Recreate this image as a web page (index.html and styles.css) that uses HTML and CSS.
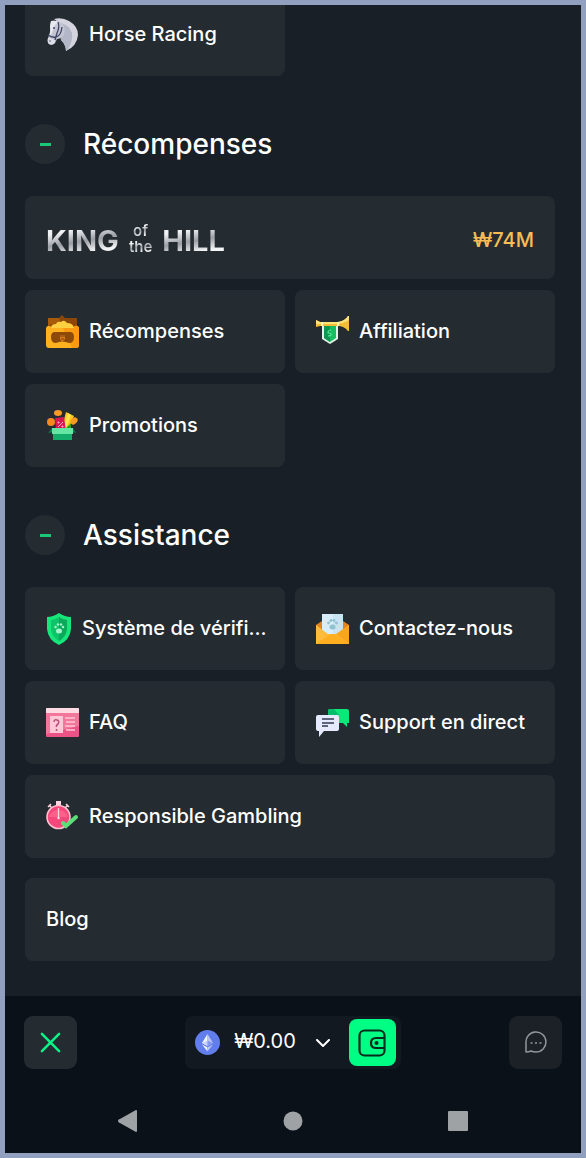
FILE: index.html
```
<!DOCTYPE html>
<html lang="fr">
<head>
  <meta charset="UTF-8" />
  <meta name="viewport" content="width=device-width, initial-scale=1.0" />
  <title>Menu</title>
  <link rel="stylesheet" href="styles.css">
</head>
<body>
  <main class="menu">
    <div class="tiles scrolled">
      <a class="tile" href="#">
        <svg class="icon" viewBox="0 0 33 33" aria-hidden="true">
          <path d="M8 1 Q16 -1 23 3 Q32 8 32 17 Q31 28 20 33 Q20 27 15 22 L12 4z" fill="#d3d4de"/>
          <path d="M15 5 Q23 7 26 15 Q27 23 22 31 L20 33 Q20 27 15 22z" fill="#b3b6c6"/>
          <path d="M5 3 Q11 2 16 5 Q20 10 18 17 Q15 21 11 21 L9 25 Q6 28 3 26 Q1 24 2 20 Q5 14 4 9z" fill="#c3c5d3"/>
          <path d="M5 3 Q9 2 13 4 L9 7 L6 15 L3 19 Q5 12 4 8z" fill="#e8e8f0"/>
          <path d="M2 20 Q6 20 9 22 L9 25 Q6 28 3 26 Q1 24 2 20z" fill="#dddde7"/>
          <path d="M12 4 Q14 9 11 15 L9 22 M2 17 Q6 20 10 19 Q15 18 16 9" fill="none" stroke="#3f4565" stroke-width="1.3"/>
          <circle cx="8" cy="10" r="1" fill="#3f4565"/>
          <circle cx="4" cy="23" r="1" fill="#8b8fa8"/>
        </svg>
        <span>Horse Racing</span>
      </a>
    </div>

    <section>
      <div class="heading">
        <button class="toggle" aria-label="Réduire Récompenses"><i></i></button>
        <h2>Récompenses</h2>
      </div>
      <div class="tiles">
        <a class="tile wide king" href="#">
          <span class="logo"><b>KING</b><small><em>of</em><em>the</em></small><b>HILL</b></span>
          <span class="prize">₩74M</span>
        </a>
        <a class="tile" href="#">
          <svg class="icon" viewBox="0 0 33 33" aria-hidden="true">
            <path d="M2 3 H13 L16 0 L19 3 H31 V14 H2z" fill="#8a4708"/>
            <path d="M2 3 H13 L15 8 L2 10z" fill="#a85b0b"/>
            <path d="M0 13 Q1 10 4 11 Q5 13 8 13 H25 Q28 13 29 11 Q32 10 33 13 V30 Q33 33 30 33 H3 Q0 33 0 30z" fill="#ffb11f"/>
            <path d="M17 13 H25 Q28 13 29 11 Q32 10 33 13 V30 Q33 33 30 33 H26z" fill="#f99a12"/>
            <path d="M5 13 Q5 9 10 9 Q11 6 15 7 Q18 4 21 8 Q27 8 28 13z" fill="#ffcf42"/>
            <path d="M9 17 H24 Q28 17 28 22 Q28 28 23 28 Q16 25 10 28 Q5 28 5 22 Q5 17 9 17z" fill="#8d4a09"/>
            <path d="M14 20 H19 V24 L16 27 L14 24z" fill="#dc7c18"/>
            <path d="M14 21 H19 M15 24 H18" stroke="#7a3e0b"/>
          </svg>
          <span>Récompenses</span>
        </a>
        <a class="tile" href="#">
          <svg class="icon" viewBox="0 0 33 33" aria-hidden="true">
            <path d="M0 5 L4 7 H22 Q29 6 32 1 H33 V16 H32 Q28 11 22 11 H4 L0 12z" fill="#f4bf37"/>
            <path d="M0 5 L4 7 H22 Q29 6 32 1 H33 V5 Q26 9 20 9 H0z" fill="#ffe37b"/>
            <path d="M6 7 V11 M22 7 V11" stroke="#fff3bb" stroke-width="2"/>
            <path d="M6 11 H22 V24 L14 29 L6 24z" fill="#e3f4e9"/>
            <path d="M8 11 H20 V23 L14 27 L8 23z" fill="#18bd61"/>
            <path d="M8 11 H14 V27 L8 23z" fill="#0c9852"/>
            <path d="M15 15 Q12 15 12 18 Q16 18 15 20 Q14 21 12 21" fill="none" stroke="#50e78d" stroke-width="1.2"/>
          </svg>
          <span>Affiliation</span>
        </a>
        <a class="tile" href="#">
          <svg class="icon" viewBox="0 0 33 33" aria-hidden="true">
            <path d="M20 3 L28 7 L22 22 H15z" fill="#ffc51f"/>
            <path d="M22 4 L25 6 L20 20 H17z" fill="#ffe34f"/>
            <path d="M9 9 L18 8 L20 22 H10z" fill="#d81855"/>
            <path d="M12 13 h1 v1 h-1z M16 17 h1 v1 h-1z M17 13 L12 18" fill="#ffabc5" stroke="#ffabc5"/>
            <ellipse cx="12" cy="4" rx="4" ry="3" fill="#f99a22"/>
            <ellipse cx="5" cy="13" rx="4" ry="4" fill="#f58b1e"/>
            <ellipse cx="28" cy="12" rx="3" ry="4" fill="#f99a22" transform="rotate(45 28 12)"/>
            <path d="M20 19 L25 14 L25 20z" fill="#27a521"/>
            <path d="M6 19 H27 L30 24 L26 23 V31 H7 V23 L2 24z" fill="#087c4d"/>
            <path d="M6 19 H27 V25 H6z" fill="#62e6a1"/>
            <path d="M7 25 H26 V31 H7z" fill="#12ad6b"/>
          </svg>
          <span>Promotions</span>
        </a>
      </div>
    </section>

    <section>
      <div class="heading">
        <button class="toggle" aria-label="Réduire Assistance"><i></i></button>
        <h2>Assistance</h2>
      </div>
      <div class="tiles">
        <a class="tile" href="#">
          <svg class="icon narrow" viewBox="0 0 26 33" aria-hidden="true">
            <path d="M13 1 Q19 5 25 5 V17 Q24 28 13 33 Q2 28 1 17 V5 Q7 5 13 1z" fill="#15e77b"/>
            <path d="M13 5 Q17 8 21 8 V17 Q20 25 13 29 Q6 25 5 17 V8 Q9 8 13 5z" fill="#0fc468"/>
            <path d="M13 5 Q17 8 21 8 V17 Q20 25 13 29z" fill="#0baa5a"/>
            <ellipse cx="13" cy="19" rx="3" ry="2.500" fill="#a5f3cd"/>
            <g fill="#a5f3cd"><circle cx="9.500" cy="15" r="1.200"/><circle cx="12" cy="12.500" r="1.200"/><circle cx="15" cy="12.500" r="1.200"/><circle cx="17" cy="15" r="1.200"/></g>
          </svg>
          <span>Système de vérifi...</span>
        </a>
        <a class="tile" href="#">
          <svg class="icon" viewBox="0 0 33 33" aria-hidden="true">
            <path d="M0 13 L6 9 H27 L33 13 V24 H0z" fill="#e38319"/>
            <path d="M6 2 H27 V21 L17 27 L6 21z" fill="#d8edf7"/>
            <path d="M17 2 H27 V21 L17 27z" fill="#c7e4f0"/>
            <ellipse cx="16.500" cy="15" rx="3" ry="2.500" fill="#8fc1cf"/>
            <g fill="#8fc1cf"><circle cx="12.500" cy="11" r="1.400"/><circle cx="15" cy="8.500" r="1.400"/><circle cx="18" cy="8.500" r="1.400"/><circle cx="20.500" cy="11" r="1.400"/></g>
            <path d="M0 13 L12 22 H21 L33 13 V32 H0z" fill="#ffbc3c"/>
            <path d="M33 13 V32 L20 22z" fill="#f9a51d"/>
            <path d="M0 32 L13 23 Q17 21 20 23 L33 32z" fill="#ffae20"/>
          </svg>
          <span>Contactez-nous</span>
        </a>
        <a class="tile" href="#">
          <svg class="icon" viewBox="0 0 33 33" aria-hidden="true">
            <rect y="2" width="33" height="29" rx="1" fill="#ed5287"/>
            <path d="M0 7 H33 V20 L0 28z" fill="#f3779b"/>
            <path d="M0 3 Q0 2 1 2 H32 Q33 2 33 3 V7 H0z" fill="#ffdce4"/>
            <rect x="4" y="10" width="13" height="17" fill="#ffc8d7"/>
            <path d="M8 16 Q8 13 11 14 Q14 15 12 18 Q10 19 10.500 21 M10.500 23 V25" fill="none" stroke="#b4527b" stroke-width="1.500"/>
            <path d="M19 12 H29 M20 16 H29 M19 20 H29 M20 24 H29" stroke="#ffc8d7" stroke-width="1.500"/>
          </svg>
          <span>FAQ</span>
        </a>
        <a class="tile" href="#">
          <svg class="icon" viewBox="0 0 33 33" aria-hidden="true">
            <path d="M14 3 H31 Q33 3 33 5 V17 H31 V21 L27 17 H12 V5 Q12 3 14 3z" fill="#0be879"/>
            <path d="M12 9 V5 Q12 3 14 3 H18 L23 9z" fill="#05bd6c"/>
            <path d="M2 9 H21 Q23 9 23 11 V23 Q23 25 21 25 H8 L3 31 V25 H2 Q0 25 0 23 V11 Q0 9 2 9z" fill="#e7eafe"/>
            <path d="M6 13 H18 M6 17 H18 M6 20 H12" stroke="#313850" stroke-width="1.300"/>
          </svg>
          <span>Support en direct</span>
        </a>
        <a class="tile wide" href="#">
          <svg class="icon" viewBox="0 0 33 33" aria-hidden="true">
            <path d="M10 1 H15 V5 H10z" fill="#ffd5df"/>
            <path d="M2 7 L5 4 M20 4 L23 7 M4 6 L6 8 M21 6 L19 8" stroke="#ffd5df" stroke-width="1.500"/>
            <circle cx="12.500" cy="17" r="11.500" fill="#f5477b" stroke="#ffc1d0" stroke-width="1.600"/>
            <path d="M3 17 A10 10 0 0 1 22 17z" fill="#fb6189"/>
            <path d="M12.500 8 V17" stroke="#ffd5df" stroke-width="1.300"/>
            <circle cx="12.500" cy="18" r="1.300" fill="#ffd5df"/>
            <path d="M17 23 L20 26 L30 17" fill="none" stroke="#5cdf78" stroke-width="4" stroke-linecap="round"/>
          </svg>
          <span>Responsible Gambling</span>
        </a>
      </div>
    </section>

    <div class="tiles blog">
      <a class="tile wide" href="#"><span>Blog</span></a>
    </div>
  </main>

  <footer>
    <div class="toolbar">
      <button class="square" aria-label="Fermer">
        <svg width="21" height="21" viewBox="0 0 22 22"><path d="M2 2 L20 20 M20 2 L2 20" fill="none" stroke="#08f588" stroke-width="2.600" stroke-linecap="round"/></svg>
      </button>
      <div class="wallet">
        <button class="balance">
          <svg width="25" height="25" viewBox="0 0 25 25" aria-hidden="true">
            <circle cx="12.500" cy="12.500" r="12.500" fill="#627eea"/>
            <path d="M12.500 4 L7 13 L12.500 16z M12.500 17.500 L7 14.500 L12.500 21.500z" fill="#f4f6ff"/>
            <path d="M12.500 4 L18 13 L12.500 16z M12.500 17.500 L18 14.500 L12.500 21.500z" fill="#bdc8f7"/>
            <path d="M7 13 L12.500 10.500 V16z" fill="#cbd4fa"/>
            <path d="M18 13 L12.500 10.500 V16z" fill="#8499ed"/>
          </svg>
          <span>₩0.00</span>
          <svg width="14" height="8" viewBox="0 0 14 8" aria-hidden="true"><path d="M1 1 L7 7 L13 1" fill="none" stroke="#fff" stroke-width="2" stroke-linecap="round"/></svg>
        </button>
        <button class="deposit" aria-label="Portefeuille">
          <svg width="28" height="28" viewBox="0 0 28 28">
            <g fill="none" stroke="#082b1c" stroke-width="2.200">
              <rect x="1.500" y="1.500" width="25" height="25" rx="5"/>
              <path d="M26 9 H18 Q13 9 13 14 Q13 19 18 19 H26"/>
            </g>
            <circle cx="18.500" cy="14" r="2" fill="#082b1c"/>
          </svg>
        </button>
      </div>
      <button class="square chat" aria-label="Chat">
        <svg width="23" height="23" viewBox="0 0 23 23">
          <path d="M2 21 V12 A10 10 0 1 1 12 21 Q9 21 7 20 Q5 21 2 21z" fill="none" stroke="#92969a" stroke-width="1.500" stroke-linejoin="round"/>
          <path d="M6.500 12 h2 M11 12 h2 M15.500 12 h2" stroke="#92969a" stroke-width="1.600"/>
        </svg>
      </button>
    </div>
    <nav class="system">
      <button aria-label="Retour"><svg width="20" height="22" viewBox="0 0 20 22"><path d="M18 1 V21 L2 12 Q0 11 2 10z" fill="#9fa2a5" stroke="#9fa2a5" stroke-linejoin="round" stroke-width="2"/></svg></button>
      <button aria-label="Accueil"><svg width="20" height="20" viewBox="0 0 20 20"><circle cx="10" cy="10" r="9.500" fill="#9fa2a5"/></svg></button>
      <button aria-label="Applications"><svg width="20" height="20" viewBox="0 0 20 20"><rect width="20" height="20" rx="1" fill="#9fa2a5"/></svg></button>
    </nav>
  </footer>
</body>
</html>
```
FILE: styles.css
```
* {
  box-sizing: border-box;
}
body {
  margin: 0;
  min-height: 100vh;
  display: flex;
  flex-direction: column;
  border: 5px solid #91a0be;
  background: #181f27;
  color: #fff;
  font-family: Inter, "Liberation Sans", sans-serif;
  font-size: 20px;
  font-weight: 500;
}
button {
  padding: 0;
  border: none;
  background: none;
  color: inherit;
  font: inherit;
  cursor: pointer;
}
svg {
  display: block;
  flex: none;
}
.menu {
  flex: 1;
  overflow: hidden;
  padding: 0 26px 35px 20px;
}
.tiles {
  display: grid;
  grid-template-columns: 1fr 1fr;
  gap: 11px 10px;
}
.scrolled {
  margin-top: -12px;
}
.blog {
  margin-top: 20px;
}
.tile {
  display: flex;
  align-items: center;
  gap: 10px;
  min-width: 0;
  height: 83px;
  padding: 0 12px 0 21px;
  border-radius: 8px;
  background: #252c31;
  color: #fff;
  text-decoration: none;
}
.tile > span {
  overflow: hidden;
  text-overflow: ellipsis;
  white-space: nowrap;
  line-height: 28px;
  padding-bottom: 2px;
}
.wide {
  grid-column: 1 / -1;
}
.icon {
  width: 33px;
  height: 33px;
}
.narrow {
  width: 26px;
}
.heading {
  display: flex;
  align-items: center;
  gap: 18px;
  padding: 48px 0 32px;
}
h2 {
  margin: 0;
  font-size: 28px;
  font-weight: 500;
  line-height: 40px;
}
.toggle {
  display: grid;
  place-items: center;
  width: 40px;
  height: 40px;
  border-radius: 50%;
  background: #252c31;
}
.toggle i {
  width: 11px;
  height: 3px;
  background: #1bc878;
}
.king {
  justify-content: space-between;
  padding-right: 21px;
}
.king .logo {
  display: flex;
  align-items: flex-end;
  gap: 10px;
  padding: 6px 0 0;
}
.logo b {
  font-size: 29px;
  font-weight: 700;
  line-height: 36px;
}
.logo small {
  display: flex;
  flex-direction: column;
  align-items: center;
  padding-bottom: 4px;
  font-size: 15px;
  font-weight: 600;
}
.logo em {
  font-style: normal;
  line-height: 16px;
}
.logo b,
.logo em {
  background: linear-gradient(170deg, #f0f1f3 25%, #9a9fa5 50%, #f4f5f6 75%);
  background-clip: text;
  -webkit-background-clip: text;
  color: transparent;
}
.king .prize {
  padding: 4px 0 0;
  color: #f7bd55;
}
footer {
  padding: 20px 19px 21px;
  background: #0a1118;
}
.toolbar {
  display: flex;
  justify-content: space-between;
}
.square {
  display: grid;
  place-items: center;
  width: 53px;
  height: 53px;
  border-radius: 9px;
  background: #252c31;
}
.chat {
  background: #1c2127;
}
.wallet {
  display: flex;
  align-items: center;
  gap: 19px;
  height: 53px;
  padding: 0 5px 0 10px;
  border-radius: 8px;
  background: #131920;
}
.balance {
  display: flex;
  align-items: center;
  gap: 20px;
}
.balance span {
  margin-left: -6px;
  padding-bottom: 3px;
  font-weight: 400;
}
.deposit {
  display: grid;
  place-items: center;
  width: 47px;
  height: 47px;
  border-radius: 8px;
  background: #00fd84;
}
.system {
  display: flex;
  justify-content: space-around;
  align-items: center;
  padding: 41px 21px 0;
}
```
